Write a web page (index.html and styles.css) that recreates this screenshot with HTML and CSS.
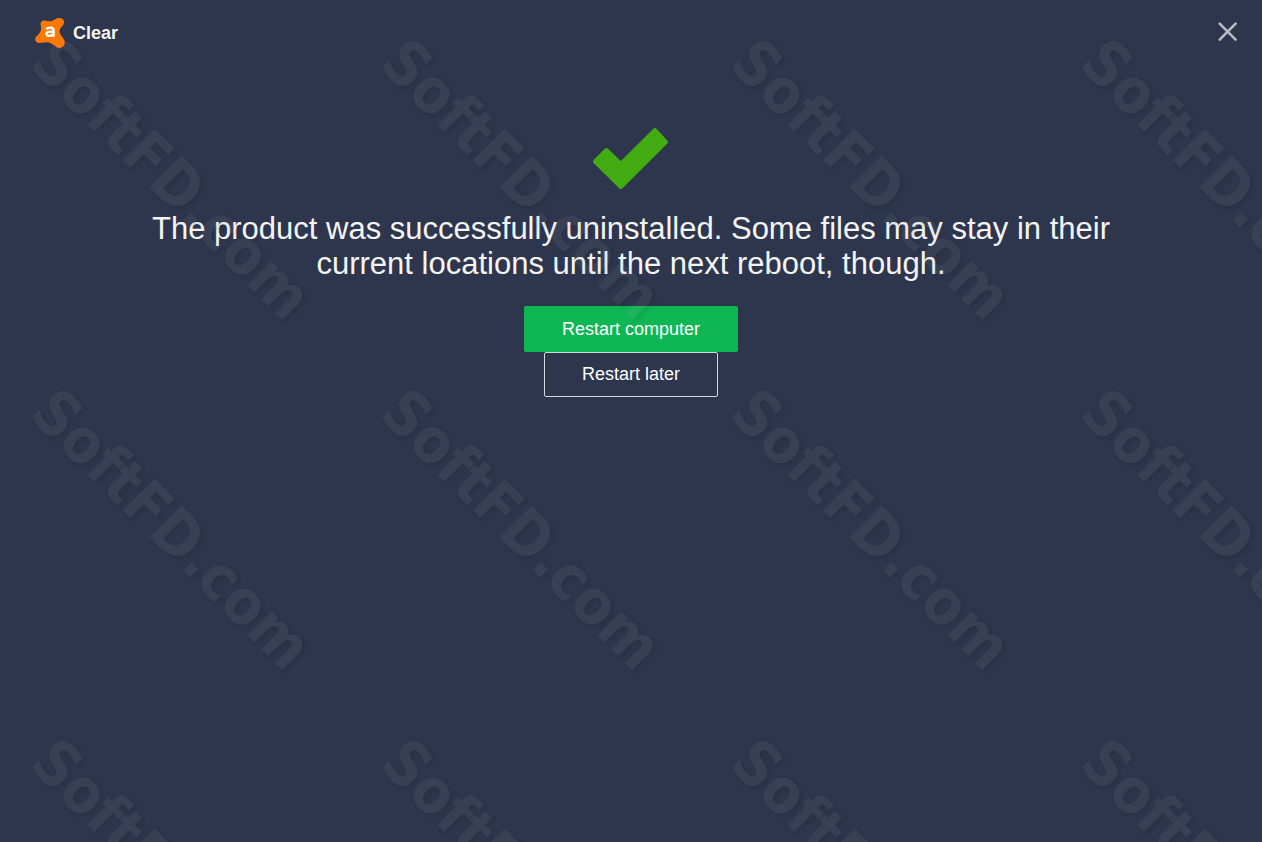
FILE: index.html
```
<!DOCTYPE html>
<html lang="en">
<head>
    <meta charset="UTF-8">
    <meta name="viewport" content="width=device-width, initial-scale=1.0">
    <title>Clear</title>
    <link rel="stylesheet" href="styles.css">
</head>
<body>

    <header class="header">
        <div class="brand">
            <svg class="logo" viewBox="0 0 30 30" aria-hidden="true">
                <path fill="#ff7800" d="M5.6 6C5.6 3.2 8 2 11 2.8C14.6 3.7 17.4 3.2 20 1.4C23.4-1.2 29-.4 29 4.1C29 6.2 27.8 7.5 26.6 8.8C24.3 11.5 23.8 13.8 25.5 16.5L29 21.6C31.2 25.7 28.5 30 24.4 30C22.2 30 20.8 28.8 19 27.3C16.8 25.4 14.4 24 11.4 24.2L4.3 25C1.3 25.1-.4 22.2.3 20C.7 18.8 1.7 18.1 2.7 17.2C5 15.1 6.3 12.5 6.1 9.7Z"/>
                <path fill="none" stroke="#fff" stroke-width="2.4" stroke-linecap="round" d="M12 10.5C13.6 9.3 18.6 8.9 18.6 12.4V17.8M18.6 13.8C14 13.2 11.4 14 11.4 15.8C11.4 18.6 17.2 18.4 18.6 15.4"/>
            </svg>
            <span class="brand-name">Clear</span>
        </div>
        <button class="close-button" type="button" aria-label="Close">
            <svg class="close-icon" viewBox="0 0 20 20" aria-hidden="true">
                <path d="M1.7 1.7L17.6 17.6M17.6 1.7L1.7 17.6" fill="none" stroke="#b8bbc2" stroke-width="2.6" stroke-linecap="round"/>
            </svg>
        </button>
    </header>

    <main class="content">
        <svg class="check" viewBox="0 0 76 62" aria-hidden="true">
            <path fill="#42ac12" stroke="#42ac12" stroke-width="4" stroke-linejoin="round" d="M2 33.5L13.5 22L27.8 36L62 2L73 14L27.8 59Z"/>
        </svg>
        <h1>The product was successfully uninstalled. Some files may stay in their current locations until the next reboot, though.</h1>
        <button class="button primary" type="button">Restart computer</button>
        <button class="button outline" type="button">Restart later</button>
    </main>

    <div class="watermark" aria-hidden="true">
        <span>SoftFD.com</span>
        <span>SoftFD.com</span>
        <span>SoftFD.com</span>
        <span>SoftFD.com</span>
        <span>SoftFD.com</span>
        <span>SoftFD.com</span>
        <span>SoftFD.com</span>
        <span>SoftFD.com</span>
        <span>SoftFD.com</span>
        <span>SoftFD.com</span>
        <span>SoftFD.com</span>
        <span>SoftFD.com</span>
    </div>

</body>
</html>
```
FILE: styles.css
```
* {
    box-sizing: border-box;
}
body {
    margin: 0;
    min-height: 100vh;
    background-color: #2d364d;
    color: #f4f4f4;
    font-family: "Liberation Sans", Arial, sans-serif;
}
.header {
    display: flex;
    justify-content: space-between;
    align-items: flex-start;
    padding: 18px 24px 0 35px;
}
.brand {
    display: flex;
    align-items: center;
    gap: 8px;
}
.logo {
    width: 30px;
    height: 30px;
    overflow: visible;
}
.brand-name {
    font-size: 18px;
    font-weight: bold;
}
.close-button {
    display: flex;
    margin-top: 4px;
    padding: 0;
    border: 0;
    background: none;
    cursor: pointer;
}
.close-icon {
    width: 20px;
    height: 20px;
}
.content {
    display: flex;
    flex-direction: column;
    align-items: center;
    max-width: 1000px;
    margin: 0 auto;
    padding-top: 80px;
}
.check {
    width: 76px;
    height: 62px;
}
h1 {
    margin: 21px 0 25px;
    font-size: 31px;
    font-weight: normal;
    line-height: 35px;
    text-align: center;
}
.button {
    padding: 0 38px;
    border: 0;
    border-radius: 2px;
    color: #fff;
    font-family: inherit;
    font-size: 18px;
    line-height: 46px;
    cursor: pointer;
}
.primary {
    background-color: #0fb754;
}
.outline {
    padding: 0 37px;
    border: 1px solid #d5d7dc;
    background: none;
    line-height: 43px;
}
/* Tiled over the whole window, clicks pass through */
.watermark {
    position: fixed;
    inset: 0;
    display: grid;
    grid-template-columns: repeat(4, 350px);
    grid-auto-rows: 350px;
    place-items: center;
    overflow: hidden;
    opacity: 0.1;
    pointer-events: none;
}
.watermark span {
    padding-top: 10px;
    color: #999;
    font-family: "DejaVu Sans Condensed", "DejaVu Sans", sans-serif;
    font-size: 62px;
    font-weight: bold;
    text-shadow: 3px 0 5px #000;
    transform: rotate(45deg);
}
```
